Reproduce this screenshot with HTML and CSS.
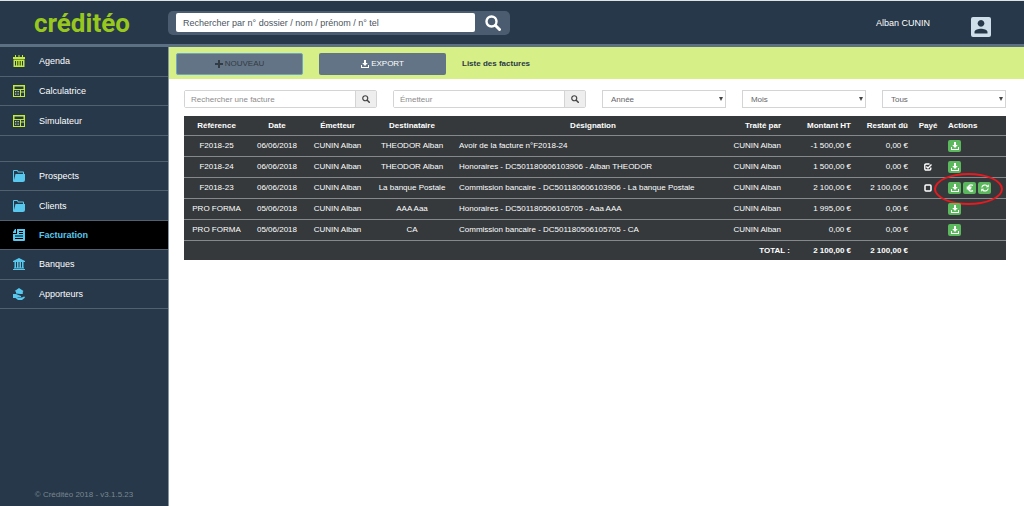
FILE: index.html
```html
<!DOCTYPE html>
<html lang="fr">
<head>
<meta charset="utf-8">
<title>Créditéo - Facturation</title>
<meta name="viewport" content="width=device-width, initial-scale=1">
<link rel="stylesheet" href="styles.css">
</head>
<body>
<svg class="defs" aria-hidden="true">
  <symbol id="i-calendar" viewBox="0 0 12 12"><path fill="currentColor" fill-rule="evenodd" d="M0 2h2V0h1v2h2.500V0h1v2H9V0h1v2h2v2H0zM.5 4.500h11V12H.5zM2 6v4.500h1V6zm2.300 0v4.500h1V6zm2.400 0v4.500h1V6zM9 6v4.500h1V6z"/></symbol>
  <symbol id="i-calc" viewBox="0 0 12 12"><path fill="currentColor" fill-rule="evenodd" d="M0 0h12v12H0zM1.500 1.500V4h9V1.500zM1 5v6h6V5zM8 5v1.500h3V5zM8 7.500V11h3V7.500z"/><path fill="currentColor" d="M2 6h1.300v1.300H2zM4.500 6h1.300v1.300H4.500zM2 8.500h1.300v1.300H2zM4.500 8.500h1.300v1.300H4.500z"/></symbol>
  <symbol id="i-folder" viewBox="0 0 12 12"><path fill="currentColor" d="M0 1q0-1 1-1h3.500l1 1.500H10q1 0 1 1V4h-1V2.500H5L4 1H1v9L2.500 4H12v6q0 2-2 2H1q-1 0-1-1z"/></symbol>
  <symbol id="i-invoice" viewBox="0 0 12 12"><path fill="currentColor" fill-rule="evenodd" d="M3 4V0H2L0 3v1zM4 0h8v11q0 1-1 1H1q-1 0-1-1V5h4zM6 2v1h4V2zM6 4v1h4V4zM2 6.500v1h8v-1zM2 9v1h8V9z"/></symbol>
  <symbol id="i-bank" viewBox="0 0 12 12"><path fill="currentColor" d="M6 0l6 3v1H0V3zM1.500 4H3v5.500H1.500zM4 4h1.500v5.500H4zM6.500 4H8v5.500H6.500zM9 4h1.500v5.500H9zM1 9.500h10v1H1zM0 11h12v1H0z"/></symbol>
  <symbol id="i-hand" viewBox="0 0 12 12"><path fill="currentColor" d="M6 0l4.500 3-.7.700V6H7L3 5.500V3.700L1.700 3zM0 6h3l5 2v1H4.500v.6H9L11 8.500q1.500.5.5 1.500L9 12H5L2.500 10H0z"/></symbol>
  <symbol id="i-search" viewBox="0 0 16 16"><circle cx="6.500" cy="6.500" r="5" fill="none" stroke="currentColor" stroke-width="2.400"/><path d="M10.500 10.500L14.500 14.500" stroke="currentColor" stroke-width="3" stroke-linecap="round"/></symbol>
  <symbol id="i-user" viewBox="0 0 20 20"><path fill="currentColor" fill-rule="evenodd" d="M2 0h16q2 0 2 2v16q0 2-2 2H2q-2 0-2-2V2Q0 0 2 0zM10 3a3.400 3.400 0 1 0 .01 0zM3.500 16.500h13V15c0-2-4-3.200-6.500-3.200S3.500 13 3.500 15z"/></symbol>
  <symbol id="i-plus" viewBox="0 0 8 8"><path fill="currentColor" d="M3 0h2v3h3v2H5v3H3V5H0V3h3z"/></symbol>
  <symbol id="i-download" viewBox="0 0 8 8"><path fill="currentColor" d="M3 0h2v3h1.800L4 6 1.200 3H3zM0 5h1v2h6V5h1v3H0z"/></symbol>
  <symbol id="i-euro" viewBox="0 0 8 8"><path fill="none" stroke="currentColor" stroke-width="1.400" d="M7 1.400C4.800.2 2.400 1 2.400 4S4.800 7.800 7 6.600M.7 3.300h4.800M.7 4.800h4.500"/></symbol>
  <symbol id="i-refresh" viewBox="0 0 8 8"><path fill="none" stroke="currentColor" stroke-width="1.200" d="M.8 3.500C1.200 1 4.500.2 6.300 2M7.200 4.500C6.800 7 3.500 7.800 1.700 6"/><path fill="currentColor" d="M7.800.3v3H4.800zM.2 7.700v-3h3z"/></symbol>
  <symbol id="i-checked" viewBox="0 0 8 8"><path fill="none" stroke="currentColor" stroke-width="1.400" d="M6.800 4.600v1.200q0 1.200-1.200 1.200H2Q.8 7 .8 5.800V2.200Q.8 1 2 1h3.500M2.300 3.400L4 5l3.500-3.500"/></symbol>
  <symbol id="i-unchecked" viewBox="0 0 8 8"><rect x="1" y="1" width="6" height="6" rx="1" fill="none" stroke="currentColor" stroke-width="1.500"/></symbol>
</svg>

<header class="topbar">
  <a class="brand" href="#">créditéo</a>
  <form class="search">
    <input class="search-input" type="text" aria-label="Rechercher" placeholder="Rechercher par n° dossier / nom / prénom / n° tel">
    <button class="search-button" type="button" aria-label="Lancer la recherche"><svg class="icon-large"><use href="#i-search"/></svg></button>
  </form>
  <span class="user-name">Alban CUNIN</span>
  <button class="user-button" type="button" aria-label="Mon compte"><svg class="icon-user"><use href="#i-user"/></svg></button>
</header>

<div class="layout">
  <aside class="sidebar">
    <nav class="menu">
      <div class="menu-group tools">
        <a class="menu-item" href="#"><svg class="icon-menu"><use href="#i-calendar"/></svg>Agenda</a>
        <a class="menu-item" href="#"><svg class="icon-menu"><use href="#i-calc"/></svg>Calculatrice</a>
        <a class="menu-item" href="#"><svg class="icon-menu"><use href="#i-calc"/></svg>Simulateur</a>
      </div>
      <div class="menu-group records">
        <a class="menu-item" href="#"><svg class="icon-menu"><use href="#i-folder"/></svg>Prospects</a>
        <a class="menu-item" href="#"><svg class="icon-menu"><use href="#i-folder"/></svg>Clients</a>
        <a class="menu-item active" href="#" aria-current="page"><svg class="icon-menu"><use href="#i-invoice"/></svg>Facturation</a>
        <a class="menu-item" href="#"><svg class="icon-menu"><use href="#i-bank"/></svg>Banques</a>
        <a class="menu-item" href="#"><svg class="icon-menu"><use href="#i-hand"/></svg>Apporteurs</a>
      </div>
    </nav>
    <p class="version">© Créditéo 2018 - v3.1.5.23</p>
  </aside>

  <main class="main">
    <div class="toolbar">
      <button class="tool-button focused" type="button"><svg class="icon-small"><use href="#i-plus"/></svg>NOUVEAU</button>
      <button class="tool-button" type="button"><svg class="icon-small"><use href="#i-download"/></svg>EXPORT</button>
      <h1 class="page-title">Liste des factures</h1>
    </div>

    <div class="content">
      <form class="filters">
        <div class="lookup">
          <input class="lookup-input" type="text" aria-label="Rechercher une facture" placeholder="Rechercher une facture">
          <button class="lookup-button" type="button" aria-label="Rechercher"><svg class="icon-small"><use href="#i-search"/></svg></button>
        </div>
        <div class="lookup">
          <input class="lookup-input" type="text" aria-label="Émetteur" placeholder="Émetteur">
          <button class="lookup-button" type="button" aria-label="Rechercher un émetteur"><svg class="icon-small"><use href="#i-search"/></svg></button>
        </div>
        <div class="choice"><select class="choice-select" aria-label="Année"><option>Année</option></select></div>
        <div class="choice"><select class="choice-select" aria-label="Mois"><option>Mois</option></select></div>
        <div class="choice"><select class="choice-select" aria-label="Statut"><option>Tous</option></select></div>
      </form>

      <table class="invoices">
        <colgroup>
          <col class="c-ref"><col class="c-date"><col class="c-from"><col class="c-to"><col><col class="c-agent"><col class="c-amount"><col class="c-due"><col class="c-paid"><col class="c-actions">
        </colgroup>
        <thead>
          <tr><th>Référence</th><th>Date</th><th>Émetteur</th><th>Destinataire</th><th>Désignation</th><th class="agent">Traité par</th><th class="num">Montant HT</th><th class="num">Restant dû</th><th>Payé</th><th class="left">Actions</th></tr>
        </thead>
        <tbody>
          <tr><td>F2018-25</td><td>06/06/2018</td><td>CUNIN Alban</td><td>THEODOR Alban</td><td class="left">Avoir de la facture n°F2018-24</td><td class="agent">CUNIN Alban</td><td class="num">-1 500,00 €</td><td class="num">0,00 €</td><td></td>
            <td><div class="actions"><button class="action" type="button" aria-label="Télécharger"><svg class="icon-small"><use href="#i-download"/></svg></button></div></td></tr>
          <tr><td>F2018-24</td><td>06/06/2018</td><td>CUNIN Alban</td><td>THEODOR Alban</td><td class="left">Honoraires - DC501180606103906 - Alban THEODOR</td><td class="agent">CUNIN Alban</td><td class="num">1 500,00 €</td><td class="num">0,00 €</td><td><svg class="icon-paid" role="img" aria-label="Payé"><use href="#i-checked"/></svg></td>
            <td><div class="actions"><button class="action" type="button" aria-label="Télécharger"><svg class="icon-small"><use href="#i-download"/></svg></button></div></td></tr>
          <tr><td>F2018-23</td><td>06/06/2018</td><td>CUNIN Alban</td><td>La banque Postale</td><td class="left">Commission bancaire - DC501180606103906 - La banque Postale</td><td class="agent">CUNIN Alban</td><td class="num">2 100,00 €</td><td class="num">2 100,00 €</td><td><svg class="icon-paid" role="img" aria-label="Non payé"><use href="#i-unchecked"/></svg></td>
            <td><div class="actions"><button class="action" type="button" aria-label="Télécharger"><svg class="icon-small"><use href="#i-download"/></svg></button><button class="action" type="button" aria-label="Encaisser"><svg class="icon-small"><use href="#i-euro"/></svg></button><button class="action" type="button" aria-label="Créer un avoir"><svg class="icon-small"><use href="#i-refresh"/></svg></button><span class="highlight"></span></div></td></tr>
          <tr><td>PRO FORMA</td><td>05/06/2018</td><td>CUNIN Alban</td><td>AAA Aaa</td><td class="left">Honoraires - DC501180506105705 - Aaa AAA</td><td class="agent">CUNIN Alban</td><td class="num">1 995,00 €</td><td class="num">0,00 €</td><td></td>
            <td><div class="actions"><button class="action" type="button" aria-label="Télécharger"><svg class="icon-small"><use href="#i-download"/></svg></button></div></td></tr>
          <tr><td>PRO FORMA</td><td>05/06/2018</td><td>CUNIN Alban</td><td>CA</td><td class="left">Commission bancaire - DC501180506105705 - CA</td><td class="agent">CUNIN Alban</td><td class="num">0,00 €</td><td class="num">0,00 €</td><td></td>
            <td><div class="actions"><button class="action" type="button" aria-label="Télécharger"><svg class="icon-small"><use href="#i-download"/></svg></button></div></td></tr>
        </tbody>
        <tfoot>
          <tr><th colspan="6" class="num">TOTAL :</th><th class="num">2 100,00 €</th><th class="num">2 100,00 €</th><th colspan="2"></th></tr>
        </tfoot>
      </table>
    </div>
  </main>
</div>
</body>
</html>
```
FILE: styles.css
```css
* { box-sizing: border-box; }

body {
  margin: 0;
  min-height: 100vh;
  display: flex;
  flex-direction: column;
  background: #fff;
  color: #fff;
  font-family: "Liberation Sans", Arial, sans-serif;
  font-size: 8px;
}

button, input, select {
  margin: 0;
  padding: 0;
  border: 0;
  font-family: inherit;
  font-size: 8px;
}

button { cursor: pointer; }
a { color: inherit; text-decoration: none; }
svg { display: block; flex: none; }

.defs { position: absolute; width: 0; height: 0; }
.icon-small { width: 8px; height: 8px; }
.icon-paid { width: 8px; height: 8px; margin: 0 auto; }
.icon-menu { width: 12px; height: 12px; }
.icon-large { width: 16px; height: 16px; }
.icon-user { width: 20px; height: 20px; }

.topbar {
  display: flex;
  align-items: center;
  height: 47px;
  padding-right: 33px;
  background: #263849;
  border-top: 1px solid #dfe3e5;
  border-bottom: 3px solid #5c7084;
}

.brand {
  width: 168px;
  padding-left: 34px;
  color: #98c81e;
  font-family: Roboto, sans-serif;
  font-size: 26px;
  font-weight: bold;
  line-height: 28px;
}

.search {
  display: flex;
  align-items: center;
  gap: 10px;
  height: 24px;
  padding: 0 9px 0 8px;
  background: #4b5c70;
  border-radius: 5px;
}

.search-input {
  width: 299px;
  height: 19px;
  padding: 0 7px;
  background: #fff;
  border-radius: 2px;
  color: #4b5560;
  font-size: 9px;
}

.search-input::placeholder { color: #4b5560; opacity: 1; }
.search-button, .user-button { background: none; color: #fff; }

.user-name { margin-left: auto; font-size: 9px; }
.user-button { margin-left: 41px; padding-top: 8px; color: #cfdfea; }

.layout { display: flex; flex: 1; }

.sidebar {
  display: flex;
  flex-direction: column;
  justify-content: space-between;
  width: 169px;
  background: #263849;
  border-right: 1px solid #8495a3;
}

.menu-group { display: grid; grid-auto-rows: 1fr; }
.tools { height: 89px; }

.records {
  height: 173px;
  padding-top: 26px;
  background: linear-gradient(#51616f, #51616f) 0 25px / 100% 1px no-repeat;
}

.menu-item {
  display: flex;
  align-items: center;
  gap: 14px;
  padding-left: 13px;
  border-bottom: 1px solid #51616f;
  font-size: 9px;
}

.tools .icon-menu { color: #c4ea3c; }
.records .icon-menu { color: #58c8ee; }
.menu-item.active { background: #000; color: #58c8ee; font-weight: bold; }

.version {
  margin: 0;
  padding-bottom: 7px;
  color: #7a8790;
  text-align: center;
}

.main { flex: 1; min-width: 0; }

.toolbar {
  display: flex;
  align-items: center;
  gap: 16px;
  height: 32px;
  padding: 1px 0 0 7px;
  background: #d6ef86;
}

.tool-button {
  display: flex;
  align-items: center;
  justify-content: center;
  gap: 2px;
  width: 127px;
  height: 22px;
  background: #637486;
  border-radius: 2px;
  color: #fff;
}

.tool-button.focused { border: 1px solid #6fa5c8; color: #333b44; }
.page-title { margin: 0; color: #2b3a45; font-size: 8px; }

.content { padding: 11px 18px 16px 15px; }

.filters {
  display: grid;
  grid-template-columns: 14fr 14fr 9fr 9fr 9fr;
  gap: 16px;
  margin-bottom: 8px;
}

.lookup {
  display: flex;
  height: 18px;
  border: 1px solid #d4d4d4;
  border-radius: 2px;
}

.lookup-input { flex: 1; min-width: 0; padding: 0 6px; color: #555; }
.lookup-input::placeholder { color: #8c8c8c; opacity: 1; }

.lookup-button {
  display: grid;
  place-items: center;
  width: 21px;
  background: #eee;
  border-left: 1px solid #d4d4d4;
  color: #444;
}

.choice { position: relative; }

.choice::after {
  content: "";
  position: absolute;
  top: 7px;
  right: 3px;
  border: 2px solid transparent;
  border-top: 4px solid #444;
  border-bottom: 0;
  pointer-events: none;
}

.choice-select {
  width: 100%;
  height: 18px;
  padding: 0 8px;
  appearance: none;
  background: #fff;
  border: 1px solid #d4d4d4;
  color: #666;
}

.invoices {
  width: 100%;
  table-layout: fixed;
  border-collapse: separate;
  border-spacing: 0;
  background: #35393c;
  line-height: 10px;
}

.c-ref { width: 65px; }
.c-date { width: 56px; }
.c-from { width: 65px; }
.c-to { width: 84px; }
.c-agent { width: 63px; }
.c-amount { width: 61px; }
.c-due { width: 57px; }
.c-paid { width: 30px; }
.c-actions { width: 63px; }

.invoices th, .invoices td {
  height: 21px;
  padding: 0 5px;
  border-bottom: 1px solid #85898c;
  text-align: center;
  white-space: nowrap;
}

.invoices thead th { height: 20px; }
.invoices tfoot th { height: 19px; border-bottom: 0; }
.invoices .left { text-align: left; }
.invoices .num { text-align: right; }
.invoices .agent { padding: 0 14px 0 0; text-align: right; }

.actions { position: relative; display: flex; gap: 2px; }

.action {
  display: grid;
  place-items: center;
  width: 13px;
  height: 12px;
  background: #5cb85c;
  border-radius: 2px;
  color: #fff;
}

.highlight {
  position: absolute;
  top: -9px;
  left: -14px;
  width: 69px;
  height: 32px;
  border: 2px solid #e8191f;
  border-radius: 50%;
  pointer-events: none;
}
```
